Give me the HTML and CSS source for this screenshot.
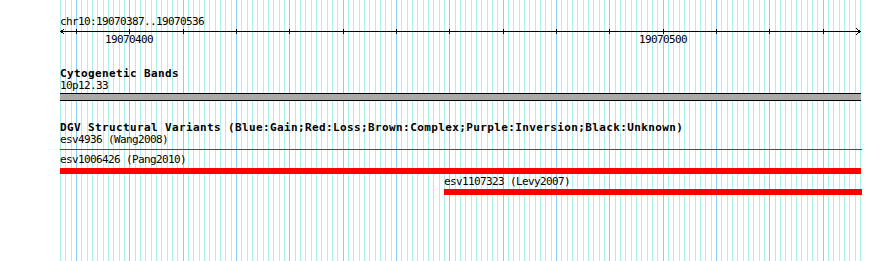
FILE: index.html
```html
<!DOCTYPE html>
<html lang="en">
<head>
    <meta charset="UTF-8">
    <title>chr10:19070387..19070536</title>
    <link rel="stylesheet" href="styles.css">
</head>
<body>
    <div class="canvas">
        <!-- ruler -->
        <div class="ruler">
            <div class="ruler-name">chr10:19070387..19070536</div>
            <svg class="axis" width="802" height="7" shape-rendering="crispEdges">
                <rect x="0" y="3" width="801" height="1" fill="#000"/>
                <path d="M4.5 0.5 L1 3.5 L4.5 6.5 M796.5 0.5 L800 3.5 L796.5 6.5" fill="none" stroke="#000" stroke-width="1"/>
                <g fill="#000">
                    <rect x="16" y="1" width="1" height="5"/>
                    <rect x="69" y="1" width="1" height="5"/>
                    <rect x="123" y="1" width="1" height="5"/>
                    <rect x="176" y="1" width="1" height="5"/>
                    <rect x="229" y="1" width="1" height="5"/>
                    <rect x="283" y="1" width="1" height="5"/>
                    <rect x="336" y="1" width="1" height="5"/>
                    <rect x="389" y="1" width="1" height="5"/>
                    <rect x="443" y="1" width="1" height="5"/>
                    <rect x="496" y="1" width="1" height="5"/>
                    <rect x="549" y="1" width="1" height="5"/>
                    <rect x="603" y="1" width="1" height="5"/>
                    <rect x="656" y="1" width="1" height="5"/>
                    <rect x="709" y="1" width="1" height="5"/>
                    <rect x="763" y="1" width="1" height="5"/>
                </g>
            </svg>
            <div class="scale-labels">
                <span style="margin-left: 45px;">19070400</span>
                <span style="margin-left: 486px;">19070500</span>
            </div>
        </div>

        <!-- Cytogenetic Bands -->
        <div class="track track-bands">
            <div class="track-title">Cytogenetic Bands</div>
            <div class="feature-label">10p12.33</div>
            <div class="band"></div>
        </div>

        <!-- DGV -->
        <div class="track track-dgv">
            <div class="track-title">DGV Structural Variants (Blue:Gain;Red:Loss;Brown:Complex;Purple:Inversion;Black:Unknown)</div>

            <div class="feature">
                <div class="feature-label">esv4936 (Wang2008)</div>
                <div class="sv-line" style="width: 802px;"></div>
            </div>

            <div class="feature">
                <div class="feature-label label-second">esv1006426 (Pang2010)</div>
                <div class="sv-bar bar-first" style="width: 801px;"></div>
            </div>

            <div class="feature" style="margin-left: 384px;">
                <div class="feature-label label-third">esv1107323 (Levy2007)</div>
                <div class="sv-bar bar-third" style="width: 418px;"></div>
            </div>
        </div>
    </div>
</body>
</html>
```

FILE: styles.css
```css
* {
    margin: 0;
    padding: 0;
    box-sizing: border-box;
}

html, body {
    background: #fff;
    height: 261px;
    overflow: hidden;
}

body {
    font-family: "DejaVu Sans Mono", monospace;
    font-size: 11px;
    letter-spacing: -0.62px;
    color: #000;
}

/* grid: minor line every bp, major every 10 bp */
.canvas {
    margin-left: 60px;
    width: 801px;
    height: 261px;
    padding-top: 16px;
    background-image:
        linear-gradient(to right,
            transparent 0 16px, #87cefa 16px 17px,
            transparent 17px 69px, #87cefa 69px 70px,
            transparent 70px 123px, #87cefa 123px 124px,
            transparent 124px 160px),
        linear-gradient(to right,
            #afeeee 0 1px, transparent 1px 5px,
            #afeeee 5px 6px, transparent 6px 11px,
            #afeeee 11px 12px, transparent 12px 16px);
    background-size: 160px 100%, 16px 100%;
    background-repeat: repeat-x;
}

.ruler-name {
    line-height: 12px;
    white-space: nowrap;
}

.axis {
    display: block;
    overflow: visible;
}

.scale-labels {
    display: flex;
    line-height: 12px;
    margin-top: -1px;
}

.track {
    margin-top: 22px;
}

.track-dgv {
    margin-top: 21px;
}

.track-title {
    font-weight: bold;
    letter-spacing: 0.38px;
    line-height: 12px;
    white-space: nowrap;
}

.feature-label {
    line-height: 12px;
    white-space: nowrap;
}

.band {
    margin-top: 1px;
    width: 801px;
    height: 8px;
    background: #aaa;
    border-top: 1px solid #000;
    border-bottom: 1px solid #000;
}

.label-second {
    margin-top: 4px;
}

.label-third {
    margin-top: 2px;
}

.sv-line {
    margin-top: 3px;
    height: 1px;
    background: #f00;
}

.sv-bar {
    height: 6px;
    background: #f00;
}

.bar-first {
    margin-top: 2px;
}

.bar-third {
    margin-top: 1px;
}
```
